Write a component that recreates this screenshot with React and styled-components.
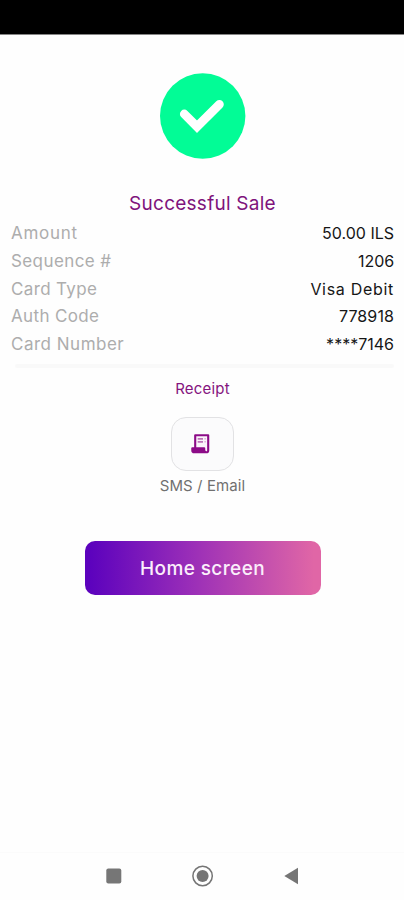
import React from "react";
import styled, { createGlobalStyle } from "styled-components";

const details = [
  { label: "Amount", value: "50.00 ILS", labelGap: 0.7, valueGap: 0 },
  { label: "Sequence #", value: "1206", labelGap: 0.4, valueGap: -0.1 },
  { label: "Card Type", value: "Visa Debit", labelGap: 0.35, valueGap: 0.7 },
  { label: "Auth Code", value: "778918", labelGap: 0.35, valueGap: 0.1 },
  { label: "Card Number", value: "****7146", labelGap: 0.5, valueGap: 0 },
];

const CheckIcon = () => (
  <svg width="86" height="86" viewBox="0 0 86 86">
    <circle cx="42.7" cy="43" r="42.7" fill="#02fc96" />
    <path
      d="M24.3 41 37 53.7 59.4 31.3"
      fill="none"
      stroke="#fff"
      strokeWidth="8.8"
      strokeLinecap="round"
    />
  </svg>
);

const ReceiptIcon = () => (
  <svg width="20" height="22" viewBox="0 0 20 22">
    <path
      d="M4.2 15V2.2H17.2V17.4Q17.2 19.3 15.2 19.3H3.2Q1.3 19.3 1.3 17.2V15.2H13.2V17.3Q13.2 19 15.2 19"
      fill="#fbf4fb"
      stroke="#8c0b87"
      strokeWidth="2.1"
      strokeLinejoin="round"
    />
    <path d="M1.3 15.2H13.2V19.3H3.2Q1.3 19.3 1.3 17.2Z" fill="#8c0b87" />
    <path d="M6.7 5.8H12M6.7 8.8H12" stroke="#bd75b9" strokeWidth="1.8" />
    <path d="M13.4 5.8H14.9M13.4 8.8H14.9" stroke="#dcb3da" strokeWidth="1.5" />
  </svg>
);

const App = () => {
  return (
    <Screen>
      <GlobalStyle />
      <StatusBar />
      <Content>
        <CheckIcon />
        <Title>Successful Sale</Title>
        <Details>
          {details.map((item) => (
            <Row key={item.label}>
              <Label $gap={item.labelGap}>{item.label}</Label>
              <Value $gap={item.valueGap}>{item.value}</Value>
            </Row>
          ))}
        </Details>
        <Divider />
        <ReceiptTitle>Receipt</ReceiptTitle>
        <ReceiptButton aria-label="Send receipt">
          <ReceiptIcon />
        </ReceiptButton>
        <Caption>SMS / Email</Caption>
        <HomeButton>Home screen</HomeButton>
      </Content>
      <NavBar>
        <svg width="16" height="16" viewBox="0 0 16 16">
          <rect x="0.3" y="0.5" width="15" height="15" rx="2" fill="#767676" />
        </svg>
        <svg width="22" height="22" viewBox="0 0 22 22">
          <circle cx="10.6" cy="11" r="9.7" fill="none" stroke="#757575" strokeWidth="1.5" />
          <circle cx="10.6" cy="11" r="6" fill="#757575" />
        </svg>
        <svg width="16" height="18" viewBox="0 0 16 18">
          <path d="M1.3 9 15 0.8V17.2Z" fill="#757575" />
        </svg>
      </NavBar>
    </Screen>
  );
};

export default App;

const GlobalStyle = createGlobalStyle`
  * {
    box-sizing: border-box;
  }

  body {
    margin: 0;
    background: #fefefe;
    font-family: Inter, "Liberation Sans", sans-serif;
  }

  svg {
    display: block;
    flex-shrink: 0;
  }
`;

const Screen = styled.div`
  display: flex;
  flex-direction: column;
  height: 900px;
  background: #fefefe;
`;

const StatusBar = styled.div`
  height: 35px;
  background: #000;
  border-bottom: 1px solid #858585;
`;

const Content = styled.main`
  flex: 1;
  display: flex;
  flex-direction: column;
  align-items: center;
  padding: 38px 10px 0 11px;
`;

const Title = styled.h1`
  margin: 33px 0 0;
  font-size: 19px;
  font-weight: 400;
  line-height: 24px;
  letter-spacing: 0.25px;
  color: #7f137c;
`;

const Details = styled.div`
  align-self: stretch;
  margin-top: 3px;
`;

const Row = styled.div`
  display: flex;
  justify-content: space-between;
  height: 27.8px;
  line-height: 28px;
`;

const Label = styled.span`
  font-size: 17px;
  color: #adadad;
  letter-spacing: ${({ $gap }) => $gap}px;
`;

const Value = styled.span`
  font-size: 16px;
  color: #161616;
  letter-spacing: ${({ $gap }) => $gap}px;
`;

const Divider = styled.div`
  align-self: stretch;
  height: 4px;
  margin: 6px 0 0 4px;
  border-radius: 2px;
  background: #f9f9f9;
`;

const ReceiptTitle = styled.h2`
  margin: 10px 0 0;
  font-size: 15px;
  font-weight: 400;
  line-height: 22px;
  letter-spacing: 0.2px;
  color: #85147f;
`;

const ReceiptButton = styled.button`
  display: flex;
  align-items: center;
  justify-content: center;
  width: 63px;
  height: 54px;
  margin-top: 17px;
  padding: 0 3px 0 0;
  border: 1px solid #e2e2e4;
  border-radius: 15px;
  background: #fbfbfc;
`;

const Caption = styled.span`
  margin-top: 4px;
  font-size: 15px;
  line-height: 22px;
  letter-spacing: 0.1px;
  color: #707070;
`;

const HomeButton = styled.button`
  width: 236px;
  height: 54px;
  margin-top: 44px;
  padding: 1px 0 0;
  border: none;
  border-radius: 10px;
  background: linear-gradient(90deg, #5c02bd 2%, #9a2eb8 45%, #e066a6 97%);
  font-family: inherit;
  font-size: 19px;
  font-weight: 500;
  letter-spacing: 0.4px;
  color: #fbeefb;
`;

const NavBar = styled.nav`
  display: flex;
  align-items: center;
  justify-content: space-between;
  height: 48px;
  padding: 0 105px 2px 106px;
  border-top: 1px solid #fbfbfb;
`;
